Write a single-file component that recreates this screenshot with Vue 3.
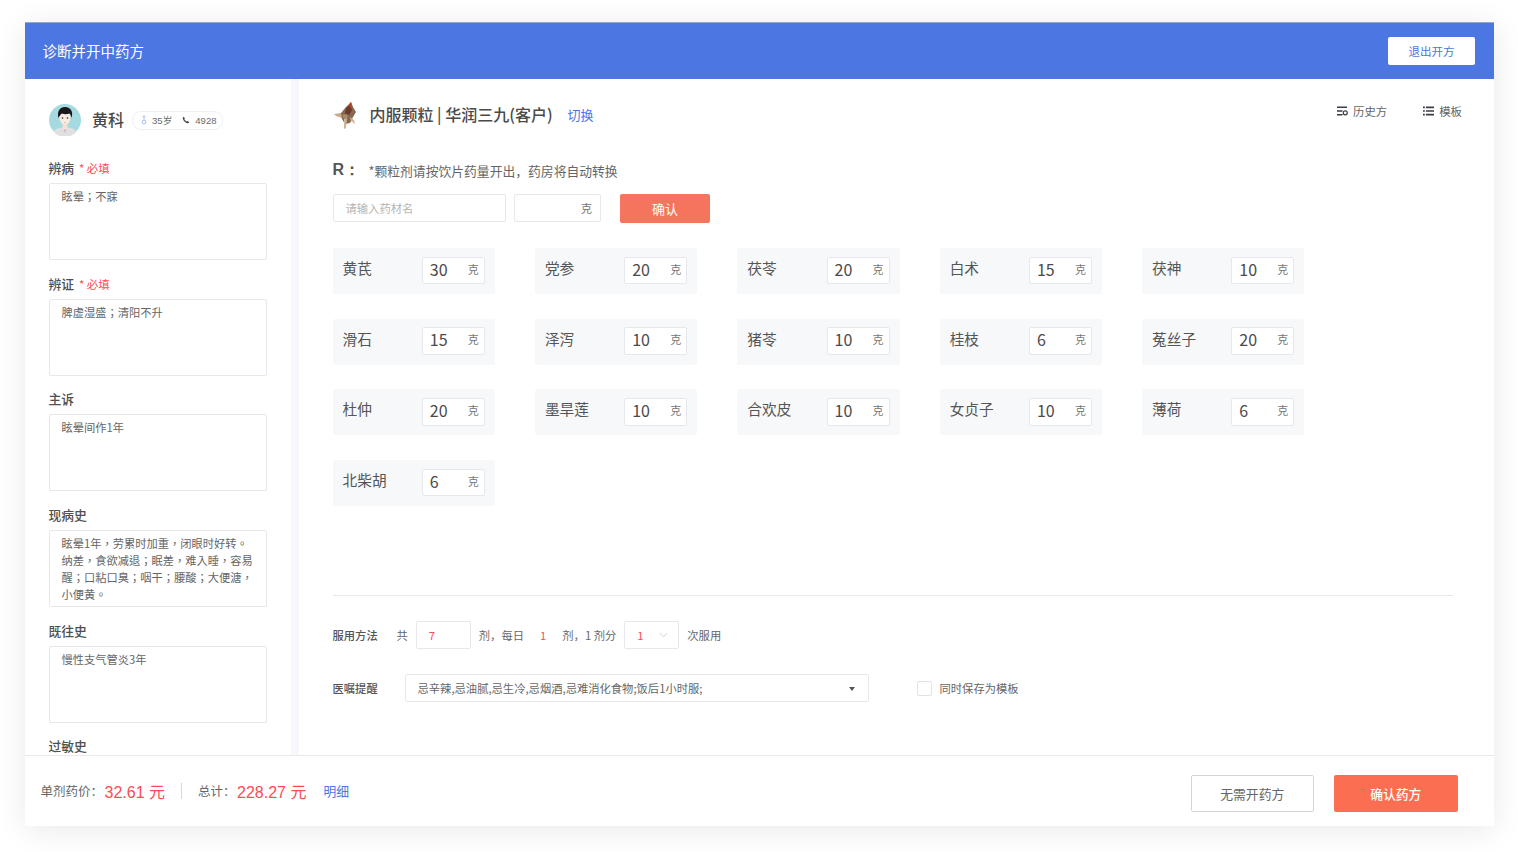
<script setup>
import { ref } from "vue";

const fields = ref([
  { label: "辨病", required: true, text: "眩晕；不寐" },
  { label: "辨证", required: true, text: "脾虚湿盛；清阳不升" },
  { label: "主诉", required: false, text: "眩晕间作1年" },
  { label: "现病史", required: false, text: "眩晕1年，劳累时加重，闭眼时好转。纳差，食欲减退；眠差，难入睡，容易醒；口粘口臭；咽干；腰酸；大便溏，小便黄。" },
  { label: "既往史", required: false, text: "慢性支气管炎3年" },
  { label: "过敏史", required: false, text: "" },
]);

const herbs = ref([
  { name: "黄芪", dose: 30 },
  { name: "党参", dose: 20 },
  { name: "茯苓", dose: 20 },
  { name: "白术", dose: 15 },
  { name: "茯神", dose: 10 },
  { name: "滑石", dose: 15 },
  { name: "泽泻", dose: 10 },
  { name: "猪苓", dose: 10 },
  { name: "桂枝", dose: 6 },
  { name: "菟丝子", dose: 20 },
  { name: "杜仲", dose: 20 },
  { name: "墨旱莲", dose: 10 },
  { name: "合欢皮", dose: 10 },
  { name: "女贞子", dose: 10 },
  { name: "薄荷", dose: 6 },
  { name: "北柴胡", dose: 6 },
]);
</script>

<template>
  <div class="page">
    <div class="window">
      <header class="top-bar">
        <span class="top-title">诊断并开中药方</span>
        <button class="exit-btn">退出开方</button>
      </header>

      <div class="main">
        <aside class="side">
          <div class="patient">
            <svg class="avatar" viewBox="0 0 32 32">
              <circle cx="16" cy="16" r="16" fill="#a5dbe0" />
              <path d="M4.500 28c2-3.500 6-4.500 11.500-4.500S25.500 24.500 27.500 28A16 16 0 0 1 4.500 28z" fill="#e0e0e0" />
              <rect x="13.500" y="18" width="5" height="7" fill="#f6dfd3" />
              <ellipse cx="16" cy="13.500" rx="5.500" ry="7.200" fill="#fbeae2" />
              <path d="M9.500 14C8 8.500 10 3 16 3s8.500 5 6.500 11c-.4-2-1-3.500-2-4.500-2 1-5.500 1-7.500 0-1.500 1-2.500 2.500-3.500 4.500z" fill="#18181a" />
              <circle cx="13.500" cy="14" r=".8" fill="#222" />
              <circle cx="18.500" cy="14" r=".8" fill="#222" />
              <path d="M15 18.500h2" stroke="#d99" stroke-width=".6" />
              <path d="M16 25v4M14.800 26.500h2.400" stroke="#b5b5b5" stroke-width=".7" />
            </svg>
            <span class="patient-name">黄科</span>
            <div class="patient-tag">
              <svg class="gender" viewBox="0 0 8 14">
                <circle cx="4" cy="10" r="2.600" fill="none" stroke="#a9bcf3" stroke-width="1.400" />
                <path d="M4 7.400V1M2 3l2-2 2 2" fill="none" stroke="#a9bcf3" stroke-width="1.300" />
              </svg>
              <span>35岁</span>
              <svg class="phone" viewBox="0 0 12 12">
                <path d="M2.500 1 4.500 3.600 3.500 5c.7 1.400 1.900 2.600 3.400 3.400l1.400-1L11 9.500c-.5 1-1.400 1.600-2.300 1.500C5 10.500 1.500 7 1 3.300.9 2.400 1.500 1.500 2.500 1z" fill="#4a4a4a" />
              </svg>
              <span>4928</span>
            </div>
          </div>

          <div class="side-form">
            <div v-for="field in fields" :key="field.label" class="field">
              <div class="field-label">
                {{ field.label }}
                <span v-if="field.required" class="must">* 必填</span>
              </div>
              <div class="field-box">{{ field.text }}</div>
            </div>
          </div>
        </aside>

        <section class="content">
          <div class="head-row">
            <svg class="herb-pic" viewBox="0 0 26 30">
              <path d="M1 14l7-1 2 3-1 2-6-2z" fill="#c9ad8b" />
              <path d="M8 13 13 7 18 2l2 5 3 5-3 5-3 6-5 1-3-5z" fill="#86674f" />
              <path d="M13 8l4-3 2 5-3 5-4-1z" fill="#6a3a2a" />
              <path d="M16 5l2-3 1 4-1 3z" fill="#b8402c" />
              <path d="M11 19l3-1-1 10-2 1zM17 17l4 3 1 4-4-3z" fill="#cdb595" />
              <path d="M9 15l5-1 1 3-4 2z" fill="#a98a68" />
            </svg>
            <span class="head-title">内服颗粒 | 华润三九(客户)</span>
            <a class="switch">切换</a>
            <div class="head-tools">
              <span class="tool">
                <svg viewBox="0 0 12 10" class="tool-icon">
                  <path d="M0 1h11M0 5h6M0 9h6" stroke="#3c3c46" stroke-width="1.600" fill="none" />
                  <circle cx="9" cy="7" r="2.200" fill="none" stroke="#3c3c46" stroke-width="1.300" />
                </svg>
                历史方
              </span>
              <span class="tool">
                <svg viewBox="0 0 12 10" class="tool-icon">
                  <path d="M3.200 1H12M3.200 5H12M3.200 9H12M0 1h2M0 5h2M0 9h2" stroke="#3c3c46" stroke-width="1.800" fill="none" />
                </svg>
                模板
              </span>
            </div>
          </div>

          <div class="r-row">
            <b class="r-mark">R：</b>
            <span class="r-note">*颗粒剂请按饮片药量开出，药房将自动转换</span>
          </div>

          <div class="add-row">
            <div class="add-name">请输入药材名</div>
            <div class="add-dose">克</div>
            <button class="add-btn">确认</button>
          </div>

          <div class="herb-grid">
            <div v-for="herb in herbs" :key="herb.name" class="herb">
              <span class="herb-name">{{ herb.name }}</span>
              <div class="herb-input">
                <span class="herb-dose">{{ herb.dose }}</span>
                <span class="herb-unit">克</span>
              </div>
            </div>
          </div>

          <div class="usage">
            <div class="usage-row">
              <span class="usage-label">服用方法</span>
              <span class="u-gong">共</span>
              <div class="u-box u-count">7</div>
              <span class="u-a">剂，每日</span>
              <span class="u-red">1</span>
              <span class="u-b">剂，1 剂分</span>
              <div class="u-box u-times">
                1
                <svg viewBox="0 0 10 6" class="u-chev"><path d="M1 1l4 4 4-4" fill="none" stroke="#c8c8c8" stroke-width="1" /></svg>
              </div>
              <span class="u-c">次服用</span>
            </div>
            <div class="usage-row advice-row">
              <span class="usage-label">医嘱提醒</span>
              <div class="advice">
                忌辛辣,忌油腻,忌生冷,忌烟酒,忌难消化食物;饭后1小时服;
                <i class="advice-arrow"></i>
              </div>
              <i class="check"></i>
              <span class="check-text">同时保存为模板</span>
            </div>
          </div>
        </section>
      </div>

      <footer class="foot">
        <div class="price">
          <span>单剂药价：</span>
          <span class="money">32.61 元</span>
          <i class="price-line"></i>
          <span>总计：</span>
          <span class="money">228.27 元</span>
          <a class="detail">明细</a>
        </div>
        <div class="foot-btns">
          <button class="btn-ghost">无需开药方</button>
          <button class="btn-main">确认药方</button>
        </div>
      </footer>
    </div>
  </div>
</template>

<style scoped>
.page {
  width: 1518px;
  height: 852px;
  padding: 22px 24px 26px 24.500px;
  box-sizing: border-box;
  background: #fff;
  font-family: "Noto Sans CJK SC", "Liberation Sans", sans-serif;
  color: #4a4a4a;
  overflow: hidden;
}

.window {
  height: 804px;
  display: flex;
  flex-direction: column;
  background: #fff;
  box-shadow: 0 4px 30px rgba(0, 0, 0, 0.09);
}

button {
  font-family: inherit;
  cursor: pointer;
}

.top-bar {
  height: 57px;
  flex: none;
  display: flex;
  align-items: center;
  justify-content: space-between;
  padding: 0 19px 0 18px;
  background: #4c76e2;
  border-top: 1px solid #9aa5c4;
  box-sizing: border-box;
}

.top-title {
  margin-top: -2px;
  color: #fff;
  font-size: 14.500px;
}

.exit-btn {
  width: 87px;
  height: 28px;
  border: 0;
  border-radius: 2px;
  background: #fff;
  color: #4c76e2;
  font-size: 11.500px;
}

.main {
  flex: 1;
  min-height: 0;
  display: flex;
}

.side {
  width: 266.500px;
  flex: none;
  padding: 0 24px;
  box-sizing: border-box;
  overflow: hidden;
}

.patient {
  display: flex;
  align-items: center;
  height: 32px;
  padding: 25px 0 21px;
}

.avatar {
  width: 32px;
  height: 32px;
}

.patient-name {
  margin: -2px 0 0 11.500px;
  font-size: 16px;
  font-weight: 500;
}

.patient-tag {
  margin-left: 8px;
  height: 17px;
  padding: 0 5px 0 8px;
  display: flex;
  align-items: center;
  border: 1px solid #f0f0f3;
  border-radius: 9px;
  font-family: "Liberation Sans", "Noto Sans CJK SC", sans-serif;
  font-size: 9.600px;
  color: #6b6b6b;
}

.gender {
  width: 6px;
  height: 10px;
  margin-right: 5px;
}

.phone {
  width: 8px;
  height: 8px;
  margin: 0 5px 0 10px;
}

.side-form {
  display: flex;
  flex-direction: column;
  gap: 12.700px;
}

.field-label {
  height: 21px;
  margin-bottom: 5px;
  line-height: 21px;
  font-size: 12.800px;
  font-weight: 500;
  color: #4f4f4f;
}

.must {
  margin-left: 2px;
  font-size: 11.400px;
  font-weight: 400;
  color: #fb4b55;
}

.field-box {
  width: 218px;
  height: 77px;
  padding: 4px 12px;
  box-sizing: border-box;
  border: 1px solid #e6e8ee;
  border-radius: 2px;
  font-family: "Noto Sans CJK TC", "Noto Sans CJK SC", sans-serif;
  font-size: 11.250px;
  line-height: 17px;
  color: #666;
}

.content {
  position: relative;
  flex: 1;
  min-width: 0;
  border-left: 8px solid #f7f8fb;
  padding: 0 41px 0 33.500px;
}

.head-row {
  height: 72px;
  display: flex;
  align-items: center;
}

.herb-pic {
  width: 26px;
  height: 30px;
  margin-right: 11px;
}

.head-title {
  margin-top: -2px;
  font-size: 16px;
  font-weight: 500;
  color: #4a4a4a;
}

.switch {
  margin: -1px 0 0 15px;
  font-size: 13px;
  color: #4c76e2;
}

.head-tools {
  position: absolute;
  top: 24px;
  right: 32px;
  display: flex;
  gap: 36px;
}

.tool {
  display: flex;
  align-items: center;
  font-size: 11.400px;
  color: #666;
}

.tool-icon {
  width: 11px;
  height: 10px;
  margin-right: 5px;
}

.r-row {
  height: 36px;
  margin-top: 1px;
  display: flex;
  align-items: center;
}

.r-mark {
  width: 36px;
  font-family: "Liberation Sans", sans-serif;
  font-size: 16px;
  color: #555;
}

.r-note {
  font-size: 12.800px;
  color: #666;
}

.add-row {
  margin-top: 6px;
  display: flex;
  gap: 8px;
}

.add-name,
.add-dose {
  height: 28px;
  box-sizing: border-box;
  border: 1px solid #e6e8ee;
  border-radius: 2px;
  font-size: 11.300px;
  line-height: 26px;
}

.add-name {
  width: 173.500px;
  padding-left: 12px;
  color: #b5b5b5;
}

.add-dose {
  width: 87px;
  padding-right: 8px;
  text-align: right;
  color: #777;
}

.add-btn {
  width: 90px;
  height: 29px;
  margin-left: 11px;
  border: 0;
  border-radius: 2px;
  background: #f5745d;
  color: #fff;
  font-size: 13px;
}

.herb-grid {
  margin-top: 25px;
  display: grid;
  grid-template-columns: repeat(5, 162.300px);
  column-gap: 40.100px;
  row-gap: 24.700px;
  height: 347px;
  align-content: start;
}

.herb {
  height: 46px;
  padding: 0 10px;
  box-sizing: border-box;
  display: flex;
  align-items: center;
  justify-content: space-between;
  background: #f7f8fa;
  border-radius: 2px;
}

.herb-name {
  margin-top: -7px;
  font-size: 14.700px;
  color: #555;
}

.herb-input {
  width: 63px;
  height: 27.500px;
  box-sizing: border-box;
  padding: 0 5px 0 7px;
  display: flex;
  align-items: center;
  justify-content: space-between;
  background: #fff;
  border: 1px solid #e6e8ee;
  border-radius: 2px;
  margin-top: -1px;
}

.herb-dose {
  margin-top: -4px;
  font-size: 16px;
  color: #4a4a4a;
}

.herb-unit {
  margin-top: -4px;
  font-size: 11px;
  color: #777;
}

.usage {
  border-top: 1px solid #e9e9ec;
  padding-top: 25px;
}

.usage-row {
  display: flex;
  align-items: center;
  height: 28px;
  font-size: 11.300px;
  color: #666;
}

.usage-label {
  width: 64px;
  font-weight: 500;
  color: #555;
}

.u-box {
  height: 28px;
  box-sizing: border-box;
  border: 1px solid #e6e8ee;
  border-radius: 2px;
  display: flex;
  align-items: center;
  color: #fb4b55;
}

.u-count {
  width: 55px;
  margin-left: 8px;
  padding-left: 12px;
}

.u-a {
  margin-left: 8px;
}

.u-red {
  margin-left: 16px;
  color: #fb4b55;
}

.u-b {
  margin-left: 16px;
}

.u-times {
  width: 55px;
  margin-left: 8px;
  padding-left: 12px;
}

.u-chev {
  width: 9px;
  height: 6px;
  margin-left: 15px;
}

.u-c {
  margin-left: 8px;
}

.advice-row {
  margin-top: 25px;
}

.advice {
  position: relative;
  width: 464px;
  height: 28px;
  margin-left: 8px;
  padding-left: 12px;
  box-sizing: border-box;
  line-height: 26px;
  border: 1px solid #e6e8ee;
  border-radius: 2px;
}

.advice-arrow {
  position: absolute;
  right: 13px;
  top: 12px;
  width: 0;
  height: 0;
  border: 3.500px solid transparent;
  border-top: 4px solid #555;
  border-bottom: 0;
}

.check {
  width: 13px;
  height: 13px;
  margin-left: 48px;
  border: 1px solid #dfe2ea;
  border-radius: 2px;
}

.check-text {
  margin-left: 8px;
}

.foot {
  height: 71px;
  flex: none;
  box-sizing: border-box;
  display: flex;
  align-items: center;
  justify-content: space-between;
  padding: 0 36.500px 0 16px;
  border-top: 1px solid #e9e9ec;
}

.price {
  display: flex;
  align-items: center;
  margin-top: -1px;
  font-size: 12.500px;
  color: #666;
}

.money {
  margin-left: 1.500px;
  font-size: 16px;
  color: #fb4b55;
  font-family: "Liberation Sans", "Noto Sans CJK SC", sans-serif;
}

.price-line {
  width: 1px;
  height: 16px;
  margin: 0 16px;
  background: #d8d8d8;
}

.detail {
  margin-left: 17px;
  font-size: 12.800px;
  color: #4c76e2;
}

.foot-btns {
  display: flex;
  gap: 20px;
  margin-top: 4px;
}

.foot-btns button {
  width: 123.500px;
  height: 37px;
  border-radius: 2px;
  font-size: 12.800px;
}

.btn-ghost {
  background: #fff;
  border: 1px solid #d5d5d5;
  color: #666;
}

.btn-main {
  border: 0;
  background: #fb6e52;
  color: #fff;
  font-weight: 500;
}
</style>
